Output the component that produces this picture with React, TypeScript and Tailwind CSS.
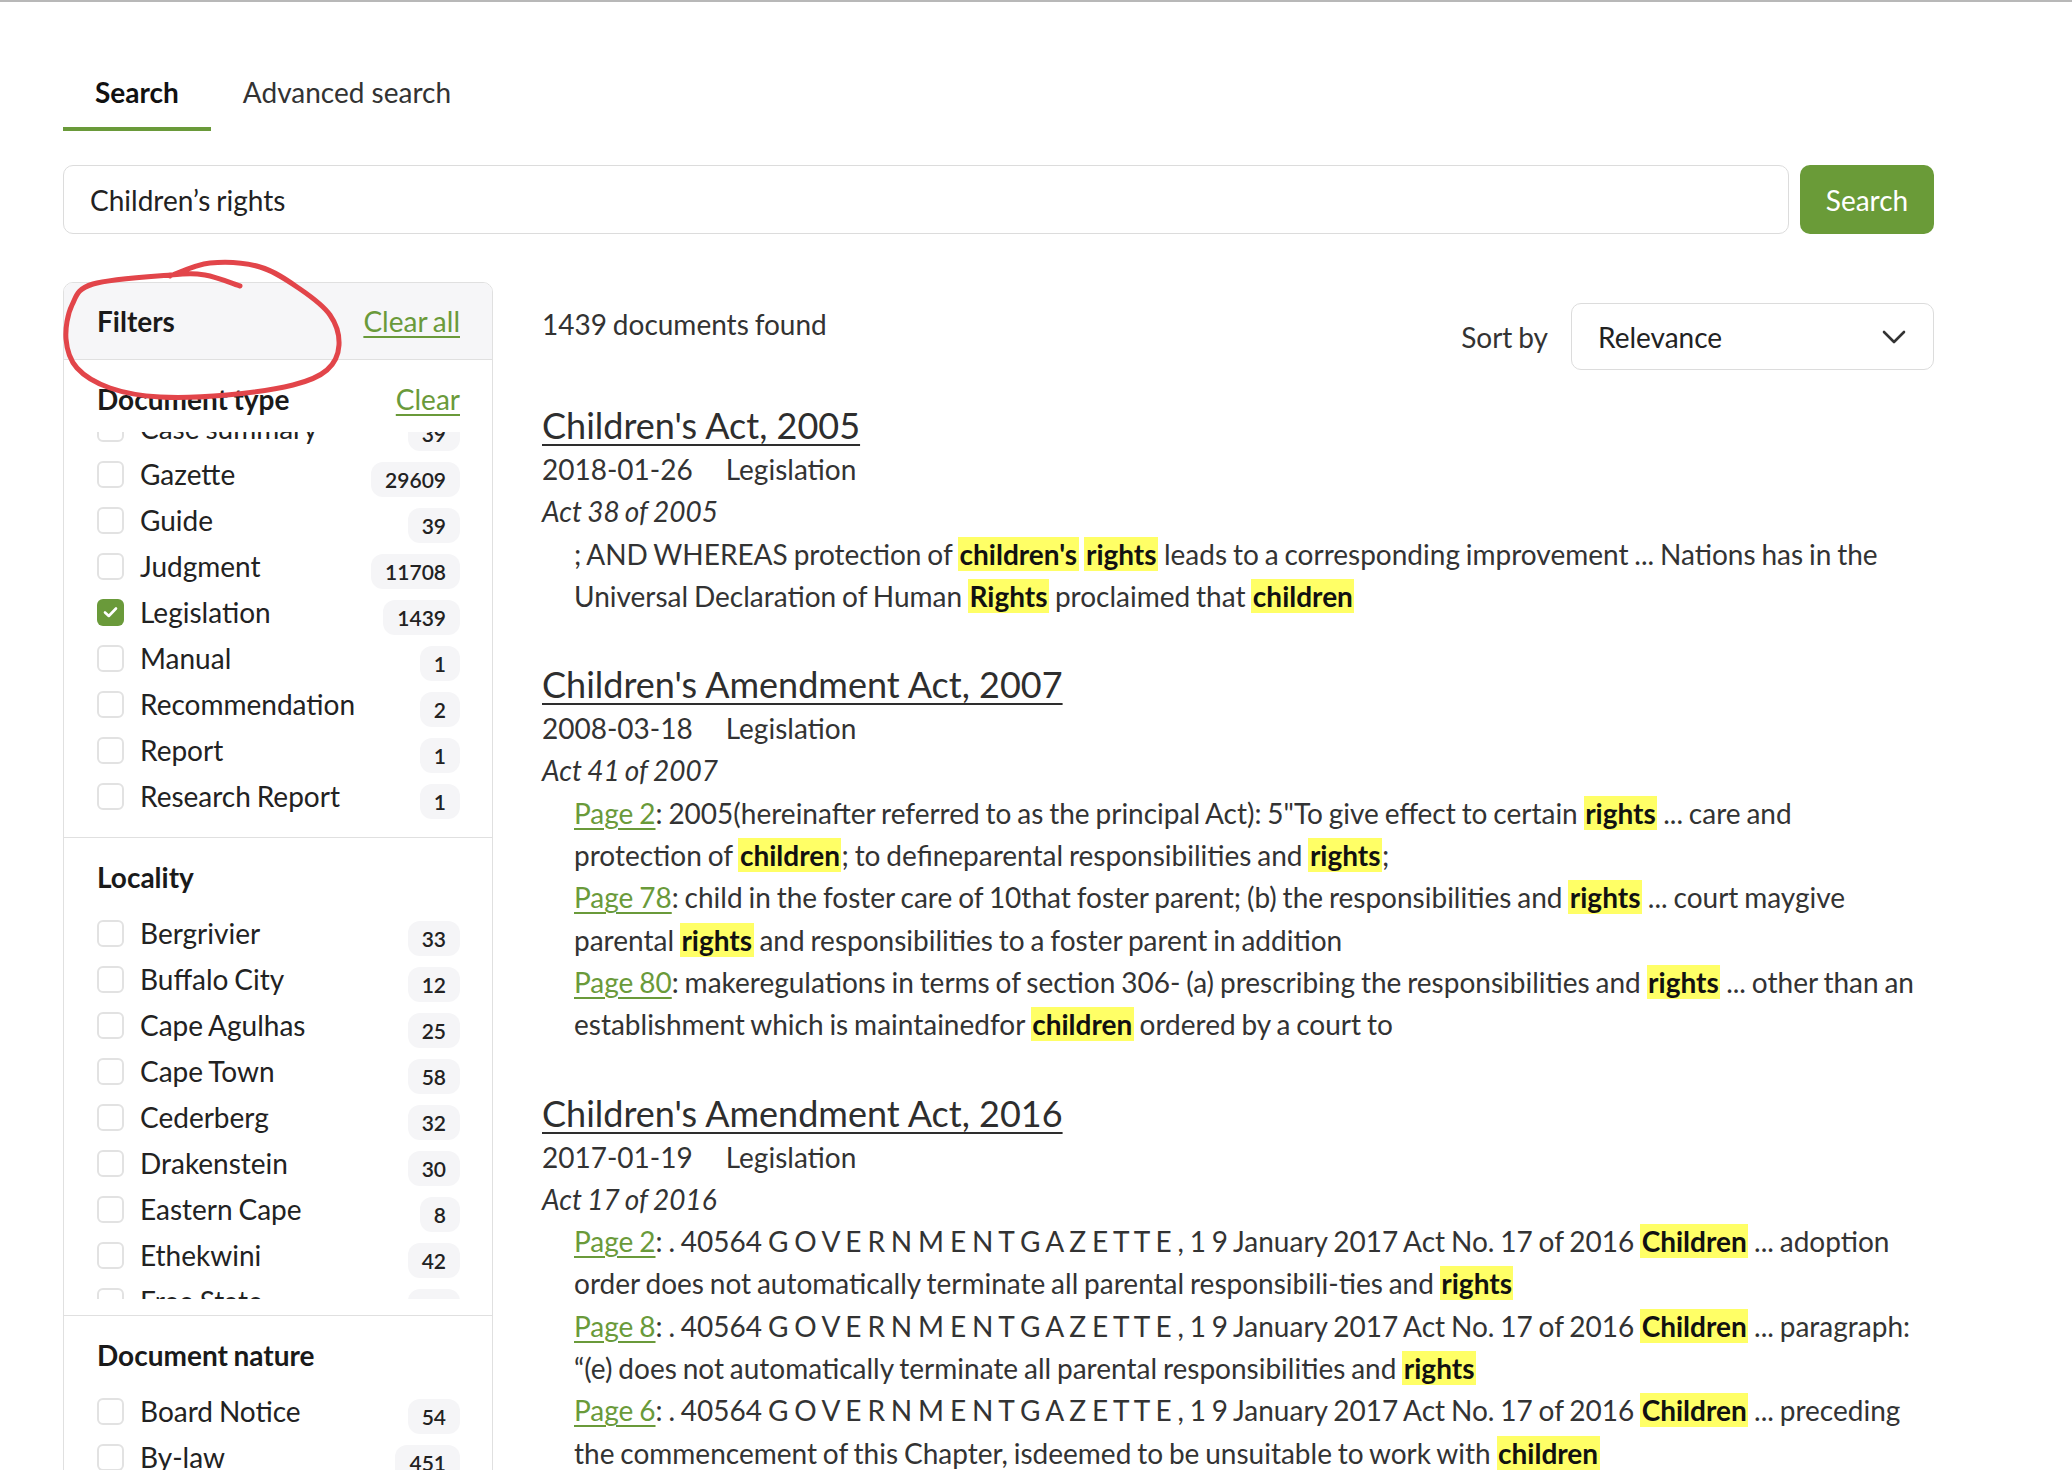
import React from "react";

type Facet = { label: string; count: string; checked?: boolean };

const docTypes: Facet[] = [
  { label: "Case summary", count: "39" },
  { label: "Gazette", count: "29609" },
  { label: "Guide", count: "39" },
  { label: "Judgment", count: "11708" },
  { label: "Legislation", count: "1439", checked: true },
  { label: "Manual", count: "1" },
  { label: "Recommendation", count: "2" },
  { label: "Report", count: "1" },
  { label: "Research Report", count: "1" },
];

const localities: Facet[] = [
  { label: "Bergrivier", count: "33" },
  { label: "Buffalo City", count: "12" },
  { label: "Cape Agulhas", count: "25" },
  { label: "Cape Town", count: "58" },
  { label: "Cederberg", count: "32" },
  { label: "Drakenstein", count: "30" },
  { label: "Eastern Cape", count: "8" },
  { label: "Ethekwini", count: "42" },
  { label: "Free State", count: "27" },
  { label: "Garden Route", count: "19" },
];

const natures: Facet[] = [
  { label: "Board Notice", count: "54" },
  { label: "By-law", count: "451" },
  { label: "Notice", count: "120" },
];

// snippet parts: plain strings, or [word] for highlighted hits
type Part = string | [string];

type Snippet = { page?: string; parts: Part[] };

type Result = {
  title: string;
  date: string;
  kind: string;
  act: string;
  snippets: Snippet[];
};

const gazette = ". 40564 G O V E R N M E N T G A Z E T T E , 1 9 January 2017 Act No. 17 of 2016 ";

const results: Result[] = [
  {
    title: "Children's Act, 2005",
    date: "2018-01-26",
    kind: "Legislation",
    act: "Act 38 of 2005",
    snippets: [
      {
        parts: [
          "; AND WHEREAS protection of ",
          ["children's"],
          " ",
          ["rights"],
          " leads to a corresponding improvement ... Nations has in the Universal Declaration of Human ",
          ["Rights"],
          " proclaimed that ",
          ["children"],
        ],
      },
    ],
  },
  {
    title: "Children's Amendment Act, 2007",
    date: "2008-03-18",
    kind: "Legislation",
    act: "Act 41 of 2007",
    snippets: [
      {
        page: "Page 2",
        parts: [
          ': 2005(hereinafter referred to as the principal Act): 5"To give effect to certain ',
          ["rights"],
          " ... care and protection of ",
          ["children"],
          "; to defineparental responsibilities and ",
          ["rights"],
          ";",
        ],
      },
      {
        page: "Page 78",
        parts: [
          ": child in the foster care of 10that foster parent; (b) the responsibilities and ",
          ["rights"],
          " ... court maygive parental ",
          ["rights"],
          " and responsibilities to a foster parent in addition",
        ],
      },
      {
        page: "Page 80",
        parts: [
          ": makeregulations in terms of section 306- (a) prescribing the responsibilities and ",
          ["rights"],
          " ... other than an establishment which is maintainedfor ",
          ["children"],
          " ordered by a court to",
        ],
      },
    ],
  },
  {
    title: "Children's Amendment Act, 2016",
    date: "2017-01-19",
    kind: "Legislation",
    act: "Act 17 of 2016",
    snippets: [
      {
        page: "Page 2",
        parts: [
          ": " + gazette,
          ["Children"],
          " ... adoption order does not automatically terminate all parental responsibili-ties and ",
          ["rights"],
        ],
      },
      {
        page: "Page 8",
        parts: [
          ": " + gazette,
          ["Children"],
          " ... paragraph: \u201c(e) does not automatically terminate all parental responsibilities and ",
          ["rights"],
        ],
      },
      {
        page: "Page 6",
        parts: [
          ": " + gazette,
          ["Children"],
          " ... preceding the commencement of this Chapter, isdeemed to be unsuitable to work with ",
          ["children"],
        ],
      },
    ],
  },
];

// hand-drawn annotation loop round "Filters"
const loopPoints: [number, number][] = [
  [170, 274], [210, 261], [260, 265], [300, 287], [330, 313], [339, 343],
  [327, 368], [293, 383], [227, 393], [160, 395], [110, 386], [77, 366],
  [66, 337], [72, 303], [93, 282], [170, 273], [205, 273], [240, 284],
];

function smoothPath(pts: [number, number][]) {
  let d = `M ${pts[0][0]} ${pts[0][1]}`;
  for (let i = 0; i < pts.length - 1; i++) {
    const p0 = pts[i - 1] ?? pts[i];
    const p1 = pts[i];
    const p2 = pts[i + 1];
    const p3 = pts[i + 2] ?? p2;
    const c1x = p1[0] + (p2[0] - p0[0]) / 6;
    const c1y = p1[1] + (p2[1] - p0[1]) / 6;
    const c2x = p2[0] - (p3[0] - p1[0]) / 6;
    const c2y = p2[1] - (p3[1] - p1[1]) / 6;
    d += ` C ${c1x} ${c1y}, ${c2x} ${c2y}, ${p2[0]} ${p2[1]}`;
  }
  return d;
}

function FacetRow({ item }: { item: Facet }) {
  return (
    <div className="flex h-[46px] items-center">
      {item.checked ? (
        <span className="flex h-[27px] w-[27px] shrink-0 items-center justify-center rounded-[6px] bg-[#6a9a3a]">
          <svg width="15" height="12" viewBox="0 0 15 12" fill="none">
            <polyline
              points="2,6.5 5.8,10 13,2.5"
              stroke="#ffffff"
              strokeWidth="2.6"
              strokeLinecap="round"
              strokeLinejoin="round"
            />
          </svg>
        </span>
      ) : (
        <span className="h-[27px] w-[27px] shrink-0 rounded-[6px] border-2 border-[#e2e2e2] bg-white" />
      )}
      <span className="ml-4 text-[28px] leading-[40px] text-[#222]">{item.label}</span>
      <span className="ml-auto mt-[10px] h-[35px] rounded-[12px] bg-[#f5f5f7] px-[14px] text-[21px] font-semibold leading-[35px] text-[#222]">
        {item.count}
      </span>
    </div>
  );
}

function FacetSection({
  title,
  items,
  clear,
  scrolled,
  last,
}: {
  title: string;
  items: Facet[];
  clear?: boolean;
  scrolled?: boolean;
  last?: boolean;
}) {
  return (
    <div className={`pl-[33px] pr-[32px] pt-[19px] pb-[16px] ${last ? "" : "border-b border-[#e0e0e0]"}`}>
      <div className="mb-[13px] flex items-center justify-between">
        <span className="text-[28px] font-bold leading-[40px] text-[#1a1a1a]">{title}</span>
        {clear && (
          <a href="#" className="text-[28px] leading-[40px] text-[#6a9a3a] underline underline-offset-4">
            Clear
          </a>
        )}
      </div>
      <div className={last ? "" : "h-[389px] overflow-hidden"}>
        <div className={scrolled ? "-mt-[27px]" : ""}>
          {items.map((it) => (
            <FacetRow key={it.label} item={it} />
          ))}
        </div>
      </div>
    </div>
  );
}

function Highlighted({ parts }: { parts: Part[] }) {
  return (
    <>
      {parts.map((p, i) =>
        typeof p === "string" ? (
          <React.Fragment key={i}>{p}</React.Fragment>
        ) : (
          <mark key={i} className="bg-[#ffff66] px-[1.5px] font-bold text-[#111]">
            {p[0]}
          </mark>
        )
      )}
    </>
  );
}

function ResultItem({ r, first }: { r: Result; first?: boolean }) {
  return (
    <div className={first ? "mt-[32px]" : "mt-[44px]"}>
      <a
        href="#"
        className="block text-[36px] leading-[46px] text-[#2e2e2e] underline decoration-2 underline-offset-[5px] [word-spacing:0px]"
      >
        {r.title}
      </a>
      <div className="flex text-[28px] leading-[42.3px] text-[#333]">
        <span>{r.date}</span>
        <span className="ml-[33px]">{r.kind}</span>
      </div>
      <div className="text-[28px] italic leading-[42.3px] text-[#333]">{r.act}</div>
      <div className="pl-8">
        {r.snippets.map((s, i) => (
          <div key={i} className="text-[28px] leading-[42.3px] text-[#333]">
            {s.page && (
              <a href="#" className="text-[#6a9a3a] underline underline-offset-4">
                {s.page}
              </a>
            )}
            <Highlighted parts={s.parts} />
          </div>
        ))}
      </div>
    </div>
  );
}

export default function App() {
  return (
    <div className="relative h-[1470px] overflow-hidden border-t-2 border-[#b8b8b8] bg-white font-['Lato','Open_Sans',sans-serif] text-[#333] [word-spacing:-1.3px]">
      <div className="w-[1934px] pl-[63px] pt-[54px]">
        {/* tabs */}
        <div className="flex">
          <button className="border-b-4 border-[#6a9a3a] px-8 pt-4 pb-[15px] text-[28px] font-bold leading-[40px] text-[#111]">
            Search
          </button>
          <button className="border-b-4 border-transparent px-8 pt-4 pb-[15px] text-[28px] leading-[40px] text-[#333]">
            Advanced search
          </button>
        </div>

        {/* search bar */}
        <div className="mt-[34px] flex">
          <div className="flex h-[69px] flex-1 items-center rounded-[10px] border border-[#dcdcdc] px-[26px] text-[28px] text-[#222]">
            Children’s rights
          </div>
          <button className="ml-[11px] h-[69px] w-[134px] rounded-[10px] bg-[#6a9b38] text-[28px] text-white">
            Search
          </button>
        </div>

        <div className="mt-[48px] flex items-start">
          {/* filters */}
          <aside className="w-[430px] shrink-0 overflow-hidden rounded-[10px] border border-[#e0e0e0]">
            <div className="flex h-[77px] items-center justify-between border-b border-[#e0e0e0] bg-[#f6f6f8] pl-[33px] pr-[32px]">
              <span className="text-[28px] font-bold text-[#1a1a1a]">Filters</span>
              <a href="#" className="text-[28px] text-[#6a9a3a] underline underline-offset-4">
                Clear all
              </a>
            </div>
            <FacetSection title="Document type" items={docTypes} clear scrolled />
            <FacetSection title="Locality" items={localities} />
            <FacetSection title="Document nature" items={natures} last />
          </aside>

          {/* results */}
          <main className="ml-[49px] flex-1">
            <div className="mt-[21px] flex items-start">
              <span className="text-[28px] leading-[42px] text-[#333]">1439 documents found</span>
              <div className="ml-auto flex items-center">
                <span className="mr-[23px] text-[28px] text-[#333]">Sort by</span>
                <div className="flex h-[67px] w-[363px] items-center justify-between rounded-[10px] border border-[#dcdcdc] pl-[26px] pr-[27px] text-[28px] text-[#222]">
                  <span>Relevance</span>
                  <svg width="24" height="14" viewBox="0 0 24 14" fill="none">
                    <polyline
                      points="2,2 12,12 22,2"
                      stroke="#333"
                      strokeWidth="2.6"
                      strokeLinecap="round"
                      strokeLinejoin="round"
                    />
                  </svg>
                </div>
              </div>
            </div>
            <div className="pr-[13px]">
              {results.map((r, i) => (
                <ResultItem key={r.title} r={r} first={i === 0} />
              ))}
            </div>
          </main>
        </div>
      </div>

      {/* red pen annotation */}
      <svg
        className="pointer-events-none absolute left-0 top-0"
        width="2072"
        height="1470"
        viewBox="0 0 2072 1470"
        fill="none"
      >
        <path
          d={smoothPath(loopPoints)}
          stroke="#e2454a"
          strokeWidth="5"
          strokeLinecap="round"
          strokeLinejoin="round"
        />
      </svg>
    </div>
  );
}
